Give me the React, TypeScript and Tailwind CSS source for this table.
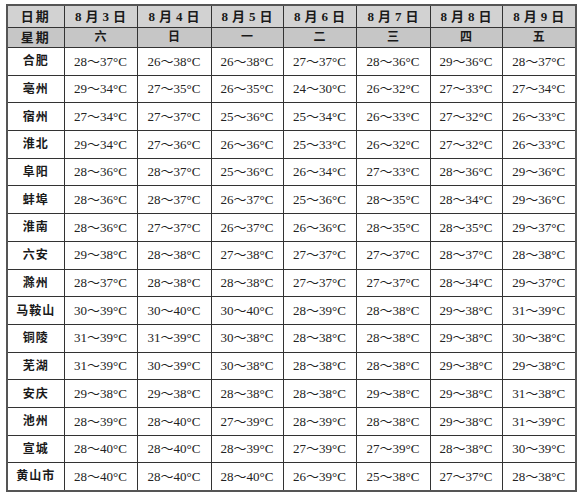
import * as React from 'react';

const dates = ['8月3日', '8月4日', '8月5日', '8月6日', '8月7日', '8月8日', '8月9日'];
const weekdays = ['六', '日', '一', '二', '三', '四', '五'];
const widths = ['w-[57px]', 'w-[73px]', 'w-[74px]', 'w-[72px]', 'w-[73px]', 'w-[74px]', 'w-[72px]', 'w-[74px]'];

const rows: [string, string[]][] = [
  ['合肥', ['28～37', '26～38', '26～38', '27～37', '28～36', '29～36', '28～37']],
  ['亳州', ['29～34', '27～35', '26～35', '24～30', '26～32', '27～33', '27～34']],
  ['宿州', ['27～34', '27～37', '25～36', '25～34', '26～33', '27～32', '26～33']],
  ['淮北', ['29～34', '27～36', '26～36', '25～33', '26～32', '27～32', '26～33']],
  ['阜阳', ['28～36', '28～37', '25～36', '26～34', '27～33', '28～36', '29～36']],
  ['蚌埠', ['28～36', '28～37', '26～37', '25～36', '28～35', '28～34', '29～36']],
  ['淮南', ['28～36', '27～37', '26～37', '26～36', '28～35', '28～35', '29～37']],
  ['六安', ['29～38', '28～38', '27～38', '27～37', '27～37', '28～37', '28～38']],
  ['滁州', ['28～37', '28～38', '28～38', '27～37', '27～37', '28～34', '29～37']],
  ['马鞍山', ['30～39', '30～40', '30～40', '28～39', '28～38', '29～38', '31～39']],
  ['铜陵', ['31～39', '31～39', '30～38', '28～38', '28～38', '29～38', '30～38']],
  ['芜湖', ['31～39', '30～39', '30～38', '28～38', '28～38', '29～38', '29～38']],
  ['安庆', ['29～38', '29～38', '28～38', '28～38', '29～38', '29～38', '31～38']],
  ['池州', ['28～39', '28～40', '27～39', '28～39', '28～38', '29～38', '31～39']],
  ['宣城', ['28～40', '28～40', '28～39', '27～39', '27～39', '28～38', '30～39']],
  ['黄山市', ['28～40', '28～40', '28～40', '26～39', '25～38', '27～37', '28～38']],
];

export default function App() {
  return (
    <div className="w-[584px] h-[500px] bg-white pl-[6px] pt-[4px] font-['Liberation_Serif','Noto_Sans_CJK_SC',serif] text-[#1a1a1a]">
      <table className="border-collapse border-2 border-[#555] table-fixed">
        <colgroup>
          {widths.map((w, i) => (
            <col key={i} className={w} />
          ))}
        </colgroup>
        <tbody>
          <tr className="h-[22px] bg-[#d2d2d2]">
            <td className="border border-[#333] text-center text-[13px] font-bold tracking-[2px]">日期</td>
            {dates.map((d) => (
              <td key={d} className="border border-[#333] text-center text-[13px] font-bold tracking-[4px] pl-[4px]">
                {d}
              </td>
            ))}
          </tr>
          <tr className="h-[20px] bg-[#c6c6c6]">
            <td className="border border-[#333] text-center text-[13px] font-bold tracking-[2px]">星期</td>
            {weekdays.map((w) => (
              <td key={w} className="border border-[#333] text-center text-[12px] font-bold">
                {w}
              </td>
            ))}
          </tr>
          {rows.map(([city, temps]) => (
            <tr key={city} className="h-[27.7px]">
              <td className="border border-[#333] text-center text-[12px] font-bold tracking-[1px]">{city}</td>
              {temps.map((t, i) => (
                <td key={i} className="border border-[#333] text-center text-[13px] text-[#222]">
                  {t}°C
                </td>
              ))}
            </tr>
          ))}
        </tbody>
      </table>
    </div>
  );
}
